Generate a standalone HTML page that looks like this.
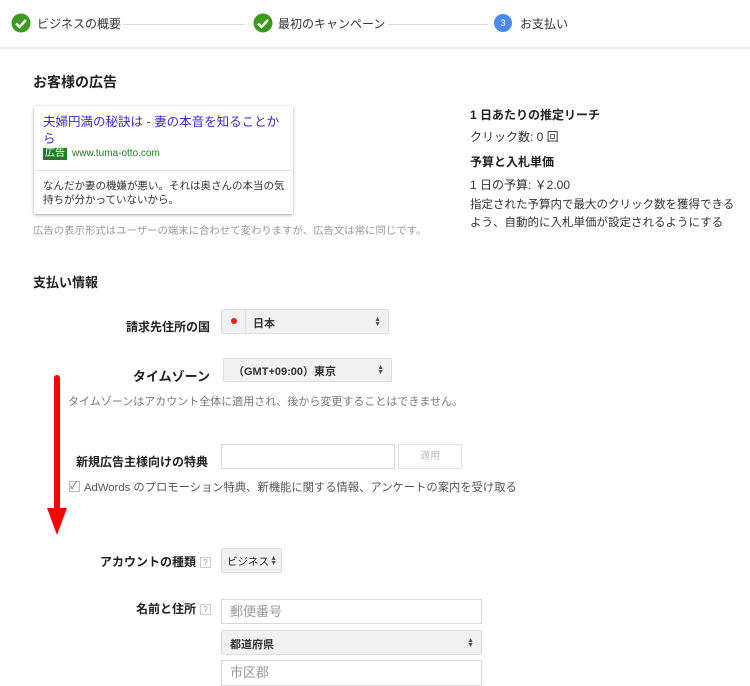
<!DOCTYPE html>
<html><head><meta charset="utf-8"><style>
*{margin:0;padding:0;box-sizing:border-box}
body{width:750px;height:685px;overflow:hidden;background:#fff;font-family:"Liberation Sans","Noto Sans CJK JP",sans-serif;color:#222;position:relative}
.a{position:absolute;white-space:nowrap}
.b{font-weight:bold}
.sel{position:absolute;background:#f1f1f1;border:1px solid #ddd;border-radius:2px;font-size:11px;font-weight:bold;color:#333}
.arr{position:absolute;right:7px;top:50%;margin-top:-5px;font-size:7px;line-height:5px;color:#555}
.inp{position:absolute;border:1px solid #d9d9d9;background:#fff;font-size:13px;color:#999;padding-left:8px}
.q{display:inline-block;width:11px;height:11px;border:1px solid #ccc;font-size:8px;color:#999;text-align:center;line-height:9px;vertical-align:middle;margin-left:4px;font-weight:normal}
.lbl{position:absolute;font-weight:bold;font-size:12px;text-align:right;white-space:nowrap}
</style></head><body>
<div class="a" style="left:0;top:47px;width:750px;height:2px;background:#eee"></div>
<svg class="a" style="left:11px;top:13px" width="20" height="20"><circle cx="10" cy="10" r="9.5" fill="#3c9a1d"/><path d="M5 10.5l3.5 3.5 6.5-7" stroke="#fff" stroke-width="2.4" fill="none"/></svg>
<div class="a" style="left:37px;top:15px;font-size:12px;color:#333">ビジネスの概要</div>
<div class="a" style="left:123px;top:24px;width:122px;height:1px;background:#ddd"></div>
<svg class="a" style="left:253px;top:13px" width="20" height="20"><circle cx="10" cy="10" r="9.5" fill="#3c9a1d"/><path d="M5 10.5l3.5 3.5 6.5-7" stroke="#fff" stroke-width="2.4" fill="none"/></svg>
<div class="a" style="left:278px;top:15px;font-size:12px;color:#333">最初のキャンペーン</div>
<div class="a" style="left:388px;top:24px;width:100px;height:1px;background:#ddd"></div>
<div class="a" style="left:494px;top:14px;width:18px;height:18px;border-radius:50%;background:#4a8af4;color:#fff;font-size:9px;text-align:center;line-height:18px">3</div>
<div class="a" style="left:520px;top:15px;font-size:12px;color:#333">お支払い</div>

<div class="a b" style="left:33px;top:72px;font-size:14px">お客様の広告</div>
<div class="a" style="left:34px;top:106px;width:259px;height:108px;box-shadow:0 1px 3px rgba(0,0,0,.35);background:#fff"></div>
<div class="a" style="left:43px;top:114px;font-size:12.5px;line-height:17px;color:#3b2bc4">夫婦円満の秘訣は - 妻の本音を知ることか<br>ら</div>
<div class="a" style="left:43px;top:148px;font-size:10px;background:#1f7d21;color:#fff;padding:0 2px;line-height:12px">広告</div>
<div class="a" style="left:72px;top:148px;font-size:10px;color:#1f7d21;line-height:12px">www.tuma-otto.com</div>
<div class="a" style="left:34px;top:170px;width:259px;height:1px;background:#e5e5e5"></div>
<div class="a" style="left:43px;top:179px;font-size:10.5px;line-height:14px;color:#333;white-space:normal;width:245px">なんだか妻の機嫌が悪い。それは奥さんの本当の気持ちが分かっていないから。</div>
<div class="a" style="left:33px;top:222px;font-size:10.4px;color:#999">広告の表示形式はユーザーの端末に合わせて変わりますが、広告文は常に同じです。</div>

<div class="a b" style="left:470px;top:106px;font-size:12px">1 日あたりの推定リーチ</div>
<div class="a" style="left:470px;top:128px;font-size:12px;color:#333">クリック数: 0 回</div>
<div class="a b" style="left:470px;top:153px;font-size:12px">予算と入札単価</div>
<div class="a" style="left:470px;top:176px;font-size:12px;color:#333">1 日の予算: ￥2.00</div>
<div class="a" style="left:470px;top:196px;font-size:11.5px;line-height:18px;color:#333">指定された予算内で最大のクリック数を獲得できる<br>よう、自動的に入札単価が設定されるようにする</div>

<div class="a b" style="left:33px;top:272px;font-size:13px">支払い情報</div>

<div class="lbl" style="right:540px;top:318px">請求先住所の国</div>
<div class="sel" style="left:221px;top:309px;width:168px;height:25px"><div class="a" style="left:0;top:0;width:24px;height:23px;border-right:1px solid #ddd"><div class="a" style="left:9px;top:8px;width:6px;height:6px;border-radius:50%;background:#e21"></div></div><span class="a" style="left:31px;top:5px">日本</span><div class="arr">▲<br>▼</div></div>

<div class="lbl" style="right:540px;top:366px;font-size:13px">タイムゾーン</div>
<div class="sel" style="left:223px;top:358px;width:169px;height:24px"><span class="a" style="left:9px;top:4px">（GMT+09:00）東京</span><div class="arr">▲<br>▼</div></div>
<div class="a" style="left:68px;top:393px;font-size:11px;color:#777">タイムゾーンはアカウント全体に適用され、後から変更することはできません。</div>

<div class="lbl" style="right:542px;top:453px">新規広告主様向けの特典</div>
<div class="inp" style="left:221px;top:444px;width:174px;height:25px"></div>
<div class="a" style="left:398px;top:444px;width:64px;height:25px;border:1px solid #e3e3e3;font-size:10px;color:#bbb;text-align:center;line-height:23px">適用</div>
<div class="a" style="left:69px;top:481px;width:11px;height:11px;border:1px solid #bbb;font-size:10px;line-height:9px;color:#555">✓</div>
<div class="a" style="left:84px;top:479px;font-size:11.3px;color:#555">AdWords のプロモーション特典、新機能に関する情報、アンケートの案内を受け取る</div>

<div class="a" style="left:54px;top:375px;width:6px;height:140px;background:#f00;border-radius:3px"></div>
<div class="a" style="left:47px;top:508px;width:0;height:0;border-left:10px solid transparent;border-right:10px solid transparent;border-top:27px solid #f00"></div>

<div class="lbl" style="right:539px;top:553px">アカウントの種類<span class="q">?</span></div>
<div class="sel" style="left:221px;top:548px;width:61px;height:25px"><span class="a" style="left:5px;top:5px;font-weight:normal;color:#222;font-size:10.5px">ビジネス</span><div class="arr" style="right:4px">▲<br>▼</div></div>

<div class="lbl" style="right:539px;top:600px">名前と住所<span class="q">?</span></div>
<div class="inp" style="left:221px;top:599px;width:261px;height:25px;line-height:23px">郵便番号</div>
<div class="sel" style="left:221px;top:630px;width:261px;height:25px"><span class="a" style="left:8px;top:5px">都道府県</span><div class="arr">▲<br>▼</div></div>
<div class="inp" style="left:221px;top:660px;width:261px;height:26px;line-height:24px">市区郡</div>
</body></html>
